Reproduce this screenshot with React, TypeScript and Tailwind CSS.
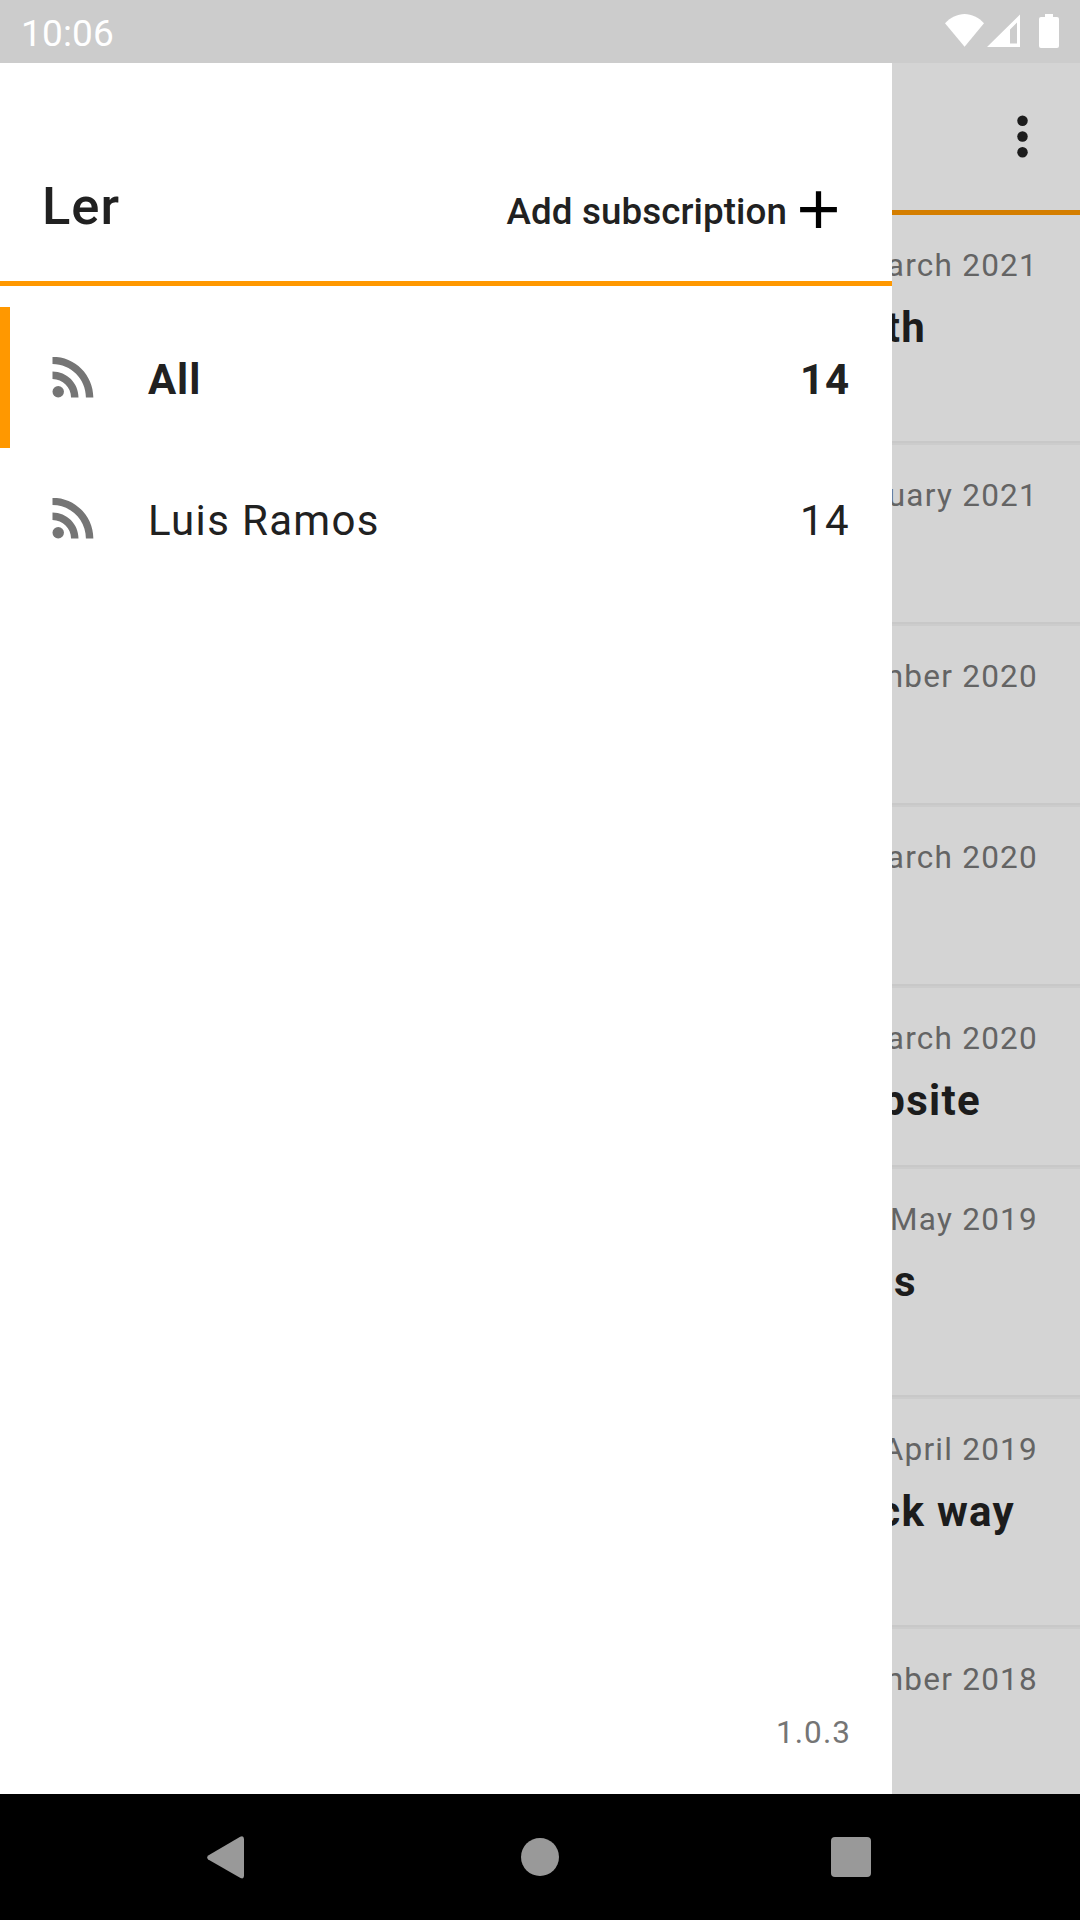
import React from "react";

type Article = { date: string; title?: string; titleClass?: string; tall?: boolean };

const articles: Article[] = [
  { date: "March 2021", title: "th", titleClass: "mr-[154px]", tall: true },
  { date: "January 2021" },
  { date: "December 2020" },
  { date: "March 2020" },
  { date: "March 2020", title: "website", titleClass: "mr-[99px]" },
  { date: "May 2019", title: "s", titleClass: "mr-[163px]", tall: true },
  { date: "April 2019", title: "quick way", titleClass: "mr-[65px]", tall: true },
  { date: "November 2018" },
];

function RssIcon() {
  return (
    <svg viewBox="0 0 24 24" className="mb-[2px] h-[63px] w-[63px] shrink-0 fill-[#757575]">
      <circle cx="6.18" cy="17.82" r="2.18" />
      <path d="M4 4.44v2.83c7.03 0 12.73 5.7 12.73 12.73h2.83c0-8.59-6.97-15.56-15.56-15.56zm0 5.66v2.83c3.9 0 7.07 3.17 7.07 7.07h2.83c0-5.47-4.43-9.9-9.9-9.9z" />
    </svg>
  );
}

function StatusBar() {
  return (
    <header className="flex h-[63px] shrink-0 items-start justify-between bg-[#cccccc] text-white">
      <span className="ml-[21px] mt-3 text-[37px] leading-[44px] tracking-[0.15px]">10:06</span>
      <svg viewBox="0 0 120 63" className="mr-[15px] h-[63px] w-[120px] fill-white">
        <path d="M0 23.2C5.500 17.500 12.500 14 19.600 14S33.700 17.500 39 23.200L19.600 46.800Z" />
        <path fillRule="evenodd" d="M75 14.500V47H42ZM72 22.500L65 29.500V43.500H72Z" />
        <path d="M100 14H108V17H112Q114 17 114 19V46Q114 48 112 48H96Q94 48 94 46V19Q94 17 96 17H100Z" />
      </svg>
    </header>
  );
}

function FeedRow({ name, count, selected }: { name: string; count: number; selected?: boolean }) {
  return (
    <li
      className={
        selected
          ? "flex h-[141px] items-center border-l-10 border-[#ff9800] pl-8 pr-[42px] font-bold tracking-[0.9px]"
          : "flex h-[141px] items-center pl-[42px] pr-[42px] tracking-[1.35px]"
      }
    >
      <RssIcon />
      <span className="ml-[43px] mt-1 flex-1 text-[42px] leading-[50px]">{name}</span>
      <span className="mt-1 text-[42px] leading-[50px]">{count}</span>
    </li>
  );
}

function Drawer() {
  return (
    <aside className="flex w-[892px] shrink-0 flex-col bg-white">
      <div className="flex h-[223px] items-end justify-between border-b-5 border-[#ff9800] pl-[42px] pr-[42px] font-medium">
        <h1 className="mb-[44px] text-[52.5px] leading-[62px] tracking-[1px]">Ler</h1>
        <button className="mb-[40px] flex items-center">
          <span className="mt-[5px] text-[36.75px] leading-[44px] tracking-[0.09px]">Add subscription</span>
          <svg viewBox="0 0 24 24" className="h-[63px] w-[63px] fill-black">
            <path d="M19 13h-6v6h-2v-6H5v-2h6V5h2v6h6v2z" />
          </svg>
        </button>
      </div>
      <ul className="mt-[21px] flex-1">
        <FeedRow name="All" count={14} selected />
        <FeedRow name="Luis Ramos" count={14} />
      </ul>
      <footer className="mb-[42px] pr-[41px] text-right text-[31.5px] leading-[38px] tracking-[1.05px] text-[#757575]">
        1.0.3
      </footer>
    </aside>
  );
}

function Content() {
  return (
    <main className="flex min-w-0 flex-1 flex-col overflow-hidden bg-[#d4d4d4] text-[#1c1c1c]">
      <div className="flex h-[152px] shrink-0 justify-end border-b-5 border-[#d47e00] pr-[26px] pt-[42px]">
        <svg viewBox="0 0 24 24" className="h-[63px] w-[63px] fill-[#1c1c1c]">
          <circle cx="12" cy="6" r="2" />
          <circle cx="12" cy="12" r="2" />
          <circle cx="12" cy="18" r="2" />
        </svg>
      </div>
      {articles.map((a, i) => (
        <article
          key={i}
          className={
            a.tall
              ? "flex h-[230px] shrink-0 flex-col items-end whitespace-nowrap pt-8"
              : "flex h-[181px] shrink-0 flex-col items-end whitespace-nowrap pt-8"
          }
        >
          <time className="mr-[42px] text-[31.5px] leading-[38px] tracking-[1.25px] text-[#646464]">{a.date}</time>
          {a.title && (
            <h2 className={`mt-[18px] text-[42px] font-bold leading-[50px] tracking-[1.31px] ${a.titleClass}`}>{a.title}</h2>
          )}
          <div className="mt-auto h-1 w-full shrink-0 border-b-2 border-[#cccccc] bg-[#c8c8c8]" />
        </article>
      ))}
    </main>
  );
}

function NavigationBar() {
  return (
    <nav className="flex h-[126px] shrink-0 items-center justify-between bg-black pl-[207px] pr-[209px]">
      <svg viewBox="0 0 37 43" className="h-[43px] w-[37px] fill-[#999999]">
        <path d="M33.200 .8Q36.800 -.8 37 3V40Q36.800 43.500 33.500 42L1.200 23.500Q-.8 21.500 1.200 19.500Z" />
      </svg>
      <div className="ml-[5px] h-[38px] w-[38px] rounded-full bg-[#999999]" />
      <div className="h-10 w-10 rounded-[4px] bg-[#999999]" />
    </nav>
  );
}

export default function App() {
  return (
    <div className="flex h-[1920px] w-[1080px] flex-col overflow-hidden font-['Roboto',sans-serif] text-[#212121]">
      <StatusBar />
      <div className="flex h-[1731px] shrink-0 overflow-hidden">
        <Drawer />
        <Content />
      </div>
      <NavigationBar />
    </div>
  );
}
